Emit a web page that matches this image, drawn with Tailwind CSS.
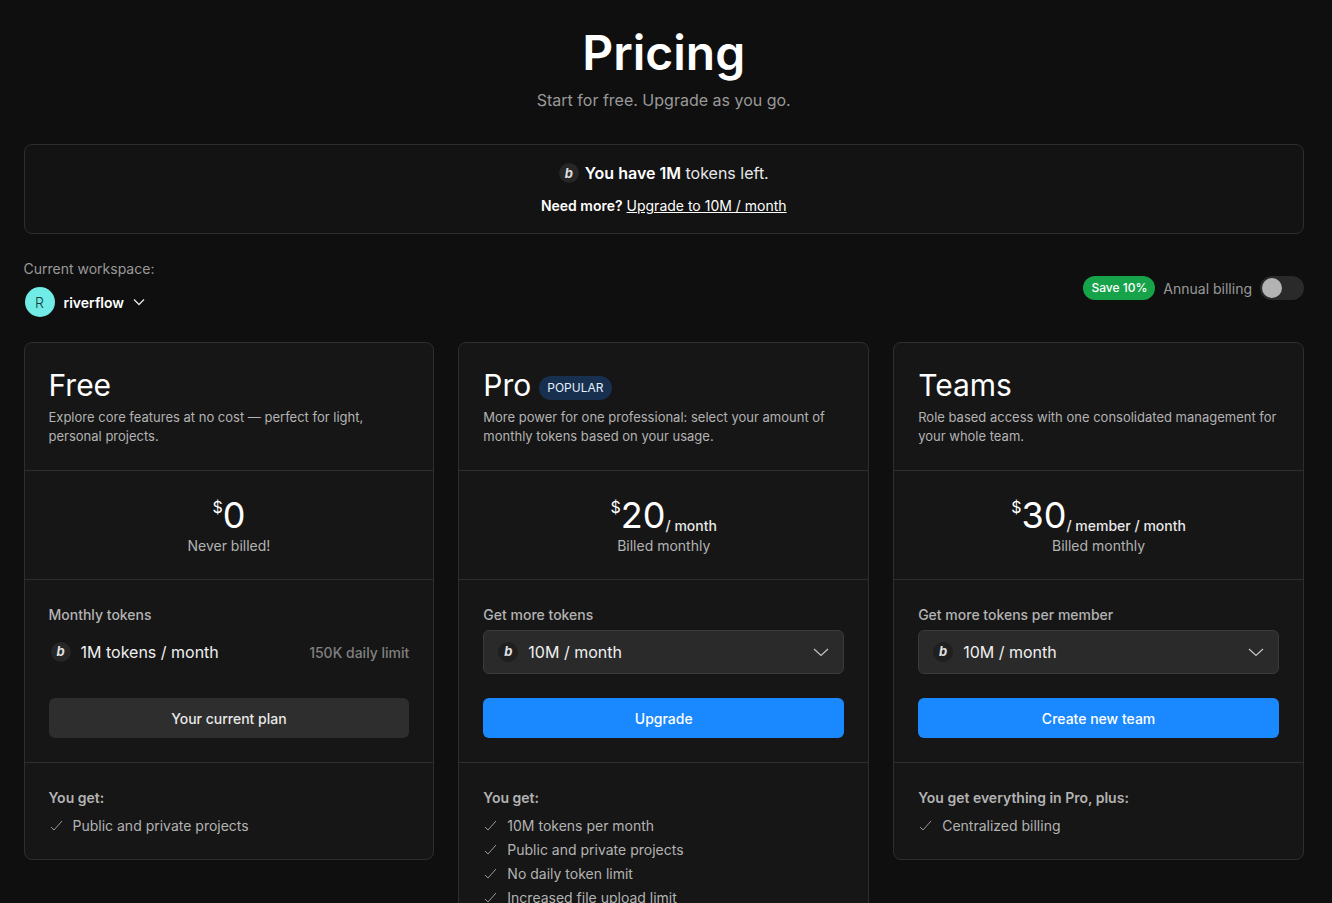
<!DOCTYPE html>
<html lang="en">
<head>
<meta charset="utf-8">
<title>Pricing</title>
<script src="https://cdn.jsdelivr.net/npm/@tailwindcss/browser@4"></script>
</head>
<body class="bg-[#0f0f0f]">
<div class="h-[903px] overflow-hidden bg-[#0f0f0f] pr-[28px] pl-[23.5px] font-['Inter',sans-serif] text-white">
  <header class="flex flex-col items-center pt-[24px]">
    <h1 class="text-[48px] leading-[58px] font-semibold text-white">Pricing</h1>
    <p class="mt-[6px] text-[16px] leading-[24px] text-[#999999]">Start for free. Upgrade as you go.</p>
  </header>

  <section class="mt-[32px] flex h-[90px] flex-col items-center rounded-lg border border-[#2e2e2e] bg-[#131313] pt-[16px]">
    <div class="flex items-center gap-[6px] text-[16px] leading-[24px]">
      <span class="flex h-[20px] w-[20px] items-center justify-center rounded-full bg-[#262626] text-[13px] font-bold text-[#e0e0e0] italic">b</span>
      <span><b class="font-semibold">You have 1M</b> <span class="text-[#e8e8e8]">tokens left.</span></span>
    </div>
    <p class="mt-[11px] text-[14px] leading-[20px]"><b class="font-semibold">Need more?</b> <a class="underline" href="#">Upgrade to 10M / month</a></p>
  </section>

  <section class="mt-[25px] flex items-center justify-between">
    <div>
      <p class="text-[14px] leading-[20px] text-[#999999]">Current workspace:</p>
      <div class="mt-[8px] flex items-center">
        <span class="ml-px flex h-[30px] w-[30px] items-center justify-center rounded-full bg-[#70ebe6] text-[14px] font-light text-[#0f3d3f]">R</span>
        <span class="mt-[2px] ml-[9px] text-[14px] leading-[20px] font-semibold">riverflow</span>
        <svg class="ml-[8px]" width="14" height="14" viewBox="0 0 14 14" fill="none" stroke="#e5e5e5" stroke-width="1.3"><path d="M2 4.5 7 9.5 12 4.5"/></svg>
      </div>
    </div>
    <div class="flex items-center">
      <span class="flex h-[24px] items-center rounded-full bg-[#16a34a] px-[8px] text-[12px] font-medium text-white">Save 10%</span>
      <span class="ml-[8px] text-[14px] text-[#999999]">Annual billing</span>
      <span class="ml-[8px] flex h-[24px] w-[44px] items-center rounded-full bg-[#2a2a2a] pl-[2px]"><span class="h-[20px] w-[20px] rounded-full bg-[#b3b3b3]"></span></span>
    </div>
  </section>

  <main class="mt-[25px] grid grid-cols-3 items-start gap-6">
    <!-- Free -->
    <article class="rounded-lg border border-[#2e2e2e] bg-[#161616]">
      <div class="h-[128px] border-b border-[#2e2e2e] px-6 pt-[23px]">
        <h2 class="h-[38px] text-[30px] leading-[38px] font-normal">Free</h2>
        <p class="mt-[4px] text-[13px] leading-[19px] text-[#b3b3b3]">Explore core features at no cost — perfect for light, personal projects.</p>
      </div>
      <div class="flex h-[109px] flex-col items-center border-b border-[#2e2e2e] pt-[24px]">
        <div class="flex items-end">
          <span class="mb-[18px] text-[16px] leading-[20px]">$</span><span class="text-[36px] leading-[40px]">0</span>
        </div>
        <p class="mt-[1px] text-[14px] leading-[20px] text-[#b3b3b3]">Never billed!</p>
      </div>
      <div class="h-[183px] border-b border-[#2e2e2e] px-6 pt-[25px]">
        <p class="text-[14px] leading-[20px] font-medium text-[#b3b3b3]">Monthly tokens</p>
        <div class="mt-[5px] flex h-[44px] items-center justify-between pl-[2px]">
          <div class="flex items-center gap-[10px]">
            <span class="flex h-[20px] w-[20px] items-center justify-center rounded-full bg-[#262626] text-[13px] font-bold text-[#e0e0e0] italic">b</span>
            <span class="text-[16px] text-[#f0f0f0]">1M tokens / month</span>
          </div>
          <span class="text-[14px] font-medium text-[#808080]">150K daily limit</span>
        </div>
        <button class="mt-[24px] h-[40px] w-full rounded-md bg-[#2e2e2e] text-[14px] font-medium text-[#e8e8e8]">Your current plan</button>
      </div>
      <div class="px-6 pt-[25px] pb-[23px]">
        <p class="text-[14px] leading-[20px] font-semibold text-[#b3b3b3]">You get:</p>
        <ul class="mt-[8px] flex flex-col gap-[4px] text-[14px] leading-[20px] text-[#b3b3b3]">
          <li class="flex items-center gap-[9px]"><svg width="15" height="15" viewBox="0 0 15 15" fill="none" stroke="#999999" stroke-width="1"><path d="M2 8 5 11 13 2"/></svg>Public and private projects</li>
        </ul>
      </div>
    </article>

    <!-- Pro -->
    <article class="rounded-lg border border-[#2e2e2e] bg-[#161616]">
      <div class="h-[128px] border-b border-[#2e2e2e] px-6 pt-[23px]">
        <div class="flex h-[38px] items-center gap-[8px]">
          <h2 class="text-[30px] leading-[38px] font-normal">Pro</h2>
          <span class="mt-[6px] flex h-[24px] items-center rounded-full bg-[#17304f] px-[8px] text-[12px] font-normal text-[#e5eefb]">POPULAR</span>
        </div>
        <p class="mt-[4px] text-[13px] leading-[19px] text-[#b3b3b3]">More power for one professional: select your amount of monthly tokens based on your usage.</p>
      </div>
      <div class="flex h-[109px] flex-col items-center border-b border-[#2e2e2e] pt-[24px]">
        <div class="flex items-end">
          <span class="mb-[18px] text-[16px] leading-[20px]">$</span><span class="text-[36px] leading-[40px]">20</span><span class="mb-[-1px] text-[14px] leading-[20px] font-medium text-[#e8e8e8]">/ month</span>
        </div>
        <p class="mt-[1px] text-[14px] leading-[20px] text-[#b3b3b3]">Billed monthly</p>
      </div>
      <div class="h-[183px] border-b border-[#2e2e2e] px-6 pt-[25px]">
        <p class="text-[14px] leading-[20px] font-medium text-[#b3b3b3]">Get more tokens</p>
        <div class="mt-[5px] flex h-[44px] items-center justify-between rounded-md border border-[#3a3a3a] bg-[#2a2a2a] pr-[14px] pl-[14px]">
          <div class="flex items-center gap-[10px]">
            <span class="flex h-[20px] w-[20px] items-center justify-center rounded-full bg-[#1f1f1f] text-[13px] font-bold text-[#e0e0e0] italic">b</span>
            <span class="text-[16px] text-[#f0f0f0]">10M / month</span>
          </div>
          <svg width="16" height="16" viewBox="0 0 16 16" fill="none" stroke="#c4c4c4" stroke-width="1.2"><path d="M1 5 8 11.5 15 5"/></svg>
        </div>
        <button class="mt-[24px] h-[40px] w-full rounded-md bg-[#1a88ff] text-[14px] font-medium text-white">Upgrade</button>
      </div>
      <div class="px-6 pt-[25px] pb-[23px]">
        <p class="text-[14px] leading-[20px] font-semibold text-[#b3b3b3]">You get:</p>
        <ul class="mt-[8px] flex flex-col gap-[4px] text-[14px] leading-[20px] text-[#b3b3b3]">
          <li class="flex items-center gap-[9px]"><svg width="15" height="15" viewBox="0 0 15 15" fill="none" stroke="#999999" stroke-width="1"><path d="M2 8 5 11 13 2"/></svg>10M tokens per month</li>
          <li class="flex items-center gap-[9px]"><svg width="15" height="15" viewBox="0 0 15 15" fill="none" stroke="#999999" stroke-width="1"><path d="M2 8 5 11 13 2"/></svg>Public and private projects</li>
          <li class="flex items-center gap-[9px]"><svg width="15" height="15" viewBox="0 0 15 15" fill="none" stroke="#999999" stroke-width="1"><path d="M2 8 5 11 13 2"/></svg>No daily token limit</li>
          <li class="flex items-center gap-[9px]"><svg width="15" height="15" viewBox="0 0 15 15" fill="none" stroke="#999999" stroke-width="1"><path d="M2 8 5 11 13 2"/></svg>Increased file upload limit</li>
        </ul>
      </div>
    </article>

    <!-- Teams -->
    <article class="rounded-lg border border-[#2e2e2e] bg-[#161616]">
      <div class="h-[128px] border-b border-[#2e2e2e] px-6 pt-[23px]">
        <h2 class="h-[38px] text-[30px] leading-[38px] font-normal">Teams</h2>
        <p class="mt-[4px] text-[13px] leading-[19px] text-[#b3b3b3]">Role based access with one consolidated management for your whole team.</p>
      </div>
      <div class="flex h-[109px] flex-col items-center border-b border-[#2e2e2e] pt-[24px]">
        <div class="flex items-end">
          <span class="mb-[18px] text-[16px] leading-[20px]">$</span><span class="text-[36px] leading-[40px]">30</span><span class="mb-[-1px] text-[14px] leading-[20px] font-medium text-[#e8e8e8]">/ member / month</span>
        </div>
        <p class="mt-[1px] text-[14px] leading-[20px] text-[#b3b3b3]">Billed monthly</p>
      </div>
      <div class="h-[183px] border-b border-[#2e2e2e] px-6 pt-[25px]">
        <p class="text-[14px] leading-[20px] font-medium text-[#b3b3b3]">Get more tokens per member</p>
        <div class="mt-[5px] flex h-[44px] items-center justify-between rounded-md border border-[#3a3a3a] bg-[#2a2a2a] pr-[14px] pl-[14px]">
          <div class="flex items-center gap-[10px]">
            <span class="flex h-[20px] w-[20px] items-center justify-center rounded-full bg-[#1f1f1f] text-[13px] font-bold text-[#e0e0e0] italic">b</span>
            <span class="text-[16px] text-[#f0f0f0]">10M / month</span>
          </div>
          <svg width="16" height="16" viewBox="0 0 16 16" fill="none" stroke="#c4c4c4" stroke-width="1.2"><path d="M1 5 8 11.5 15 5"/></svg>
        </div>
        <button class="mt-[24px] h-[40px] w-full rounded-md bg-[#1a88ff] text-[14px] font-medium text-white">Create new team</button>
      </div>
      <div class="px-6 pt-[25px] pb-[23px]">
        <p class="text-[14px] leading-[20px] font-semibold text-[#b3b3b3]">You get everything in Pro, plus:</p>
        <ul class="mt-[8px] flex flex-col gap-[4px] text-[14px] leading-[20px] text-[#b3b3b3]">
          <li class="flex items-center gap-[9px]"><svg width="15" height="15" viewBox="0 0 15 15" fill="none" stroke="#999999" stroke-width="1"><path d="M2 8 5 11 13 2"/></svg>Centralized billing</li>
        </ul>
      </div>
    </article>
  </main>
</div>
</body>
</html>
